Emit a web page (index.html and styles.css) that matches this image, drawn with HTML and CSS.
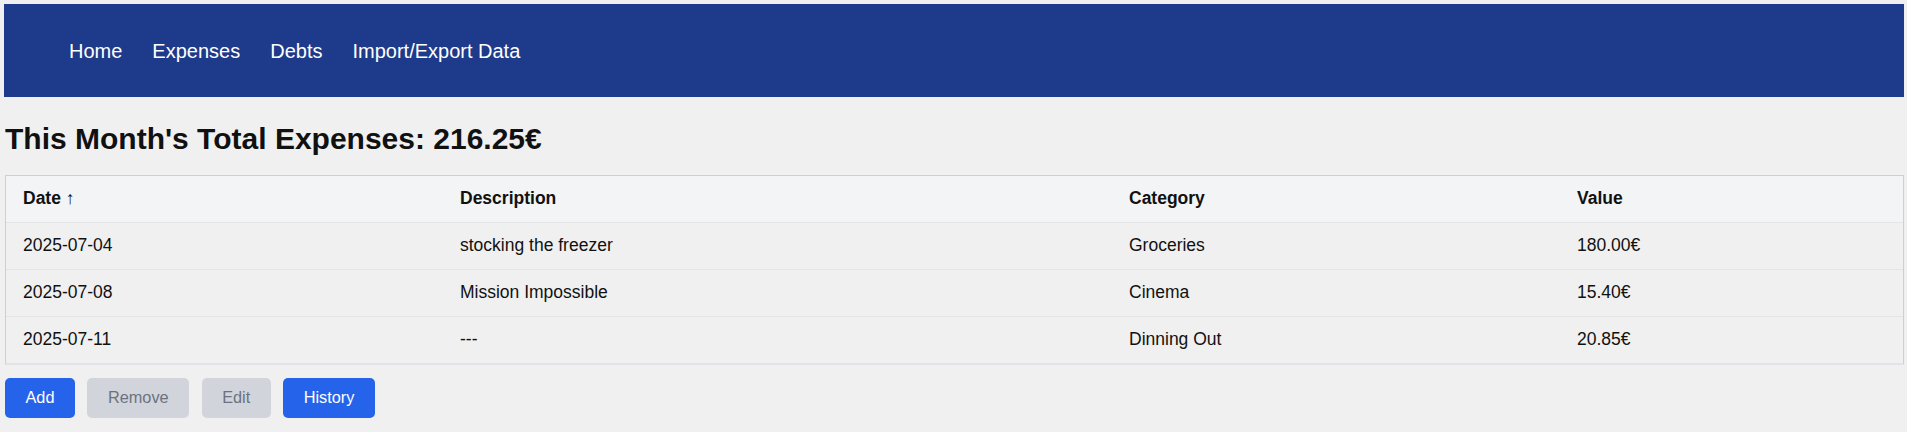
FILE: index.html
```html
<!DOCTYPE html>
<html lang="en">
<head>
<meta charset="utf-8">
<title>Expenses</title>
<link rel="stylesheet" href="styles.css">
</head>
<body>
<nav class="navbar">
  <ul class="nav-list">
    <li><a class="nav-link" href="#">Home</a></li>
    <li><a class="nav-link" href="#">Expenses</a></li>
    <li><a class="nav-link" href="#">Debts</a></li>
    <li><a class="nav-link" href="#">Import/Export Data</a></li>
  </ul>
</nav>
<main class="content">
  <h1 class="total">This Month's Total Expenses: 216.25€</h1>
  <div class="table-wrap">
    <table class="expenses">
      <thead>
        <tr>
          <th class="col-date">Date <span class="sort">↑</span></th>
          <th class="col-desc">Description</th>
          <th class="col-cat">Category</th>
          <th class="col-val">Value</th>
        </tr>
      </thead>
      <tbody>
        <tr><td>2025-07-04</td><td>stocking the freezer</td><td>Groceries</td><td>180.00€</td></tr>
        <tr><td>2025-07-08</td><td>Mission Impossible</td><td>Cinema</td><td>15.40€</td></tr>
        <tr><td>2025-07-11</td><td>---</td><td>Dinning Out</td><td>20.85€</td></tr>
      </tbody>
    </table>
  </div>
  <div class="actions">
    <button class="btn btn-primary">Add</button>
    <button class="btn btn-disabled" disabled>Remove</button>
    <button class="btn btn-disabled" disabled>Edit</button>
    <button class="btn btn-primary">History</button>
  </div>
</main>
</body>
</html>
```

FILE: styles.css
```css
html, body {
  margin: 0;
  padding: 0;
}
body {
  background: #f0f0f0;
  padding: 4px 3px 4px 4px;
  font-family: "Liberation Sans", Arial, sans-serif;
  color: #111;
}
.navbar {
  background: #1e3a8a;
  height: 93px;
  display: flex;
  align-items: center;
}
.nav-list {
  list-style: none;
  margin: 0;
  padding: 0 0 0 65px;
  display: flex;
  gap: 30px;
}
.nav-link {
  color: #ffffff;
  text-decoration: none;
  font-size: 20px;
  line-height: 24px;
}
.content {
  padding-left: 1px;
}
.total {
  margin: 24px 0 18px 0;
  font-size: 30px;
  line-height: 36px;
  font-weight: 700;
  color: #111;
}
.table-wrap {
  border: 1px solid #cfcfd2;
  border-bottom: 2px solid #e2e2e8;
}
.expenses {
  width: 100%;
  border-collapse: collapse;
  table-layout: fixed;
  font-size: 17.5px;
  line-height: 20px;
}
.expenses th,
.expenses td {
  box-sizing: border-box;
  text-align: left;
  padding: 12px 17px 14px 17px;
  border-bottom: 1px solid #e3e4e8;
  white-space: nowrap;
}
.expenses tbody tr:last-child td {
  border-bottom: none;
}
.expenses thead th {
  background: #f3f4f6;
  font-weight: 700;
}
.sort {
  font-weight: 400;
}
.col-date { width: 437px; }
.col-desc { width: 669px; }
.col-cat { width: 448px; }
.col-val { width: auto; }
.actions {
  display: flex;
  gap: 12.5px;
  margin-top: 13px;
}
.btn {
  height: 39.5px;
  padding: 0 20.5px;
  border: none;
  border-radius: 5px;
  font-family: "Liberation Sans", Arial, sans-serif;
  font-size: 16.3px;
}
.btn-primary {
  background: #2563eb;
  color: #ffffff;
}
.btn-disabled {
  background: #d1d5db;
  color: #6b7280;
}
```
